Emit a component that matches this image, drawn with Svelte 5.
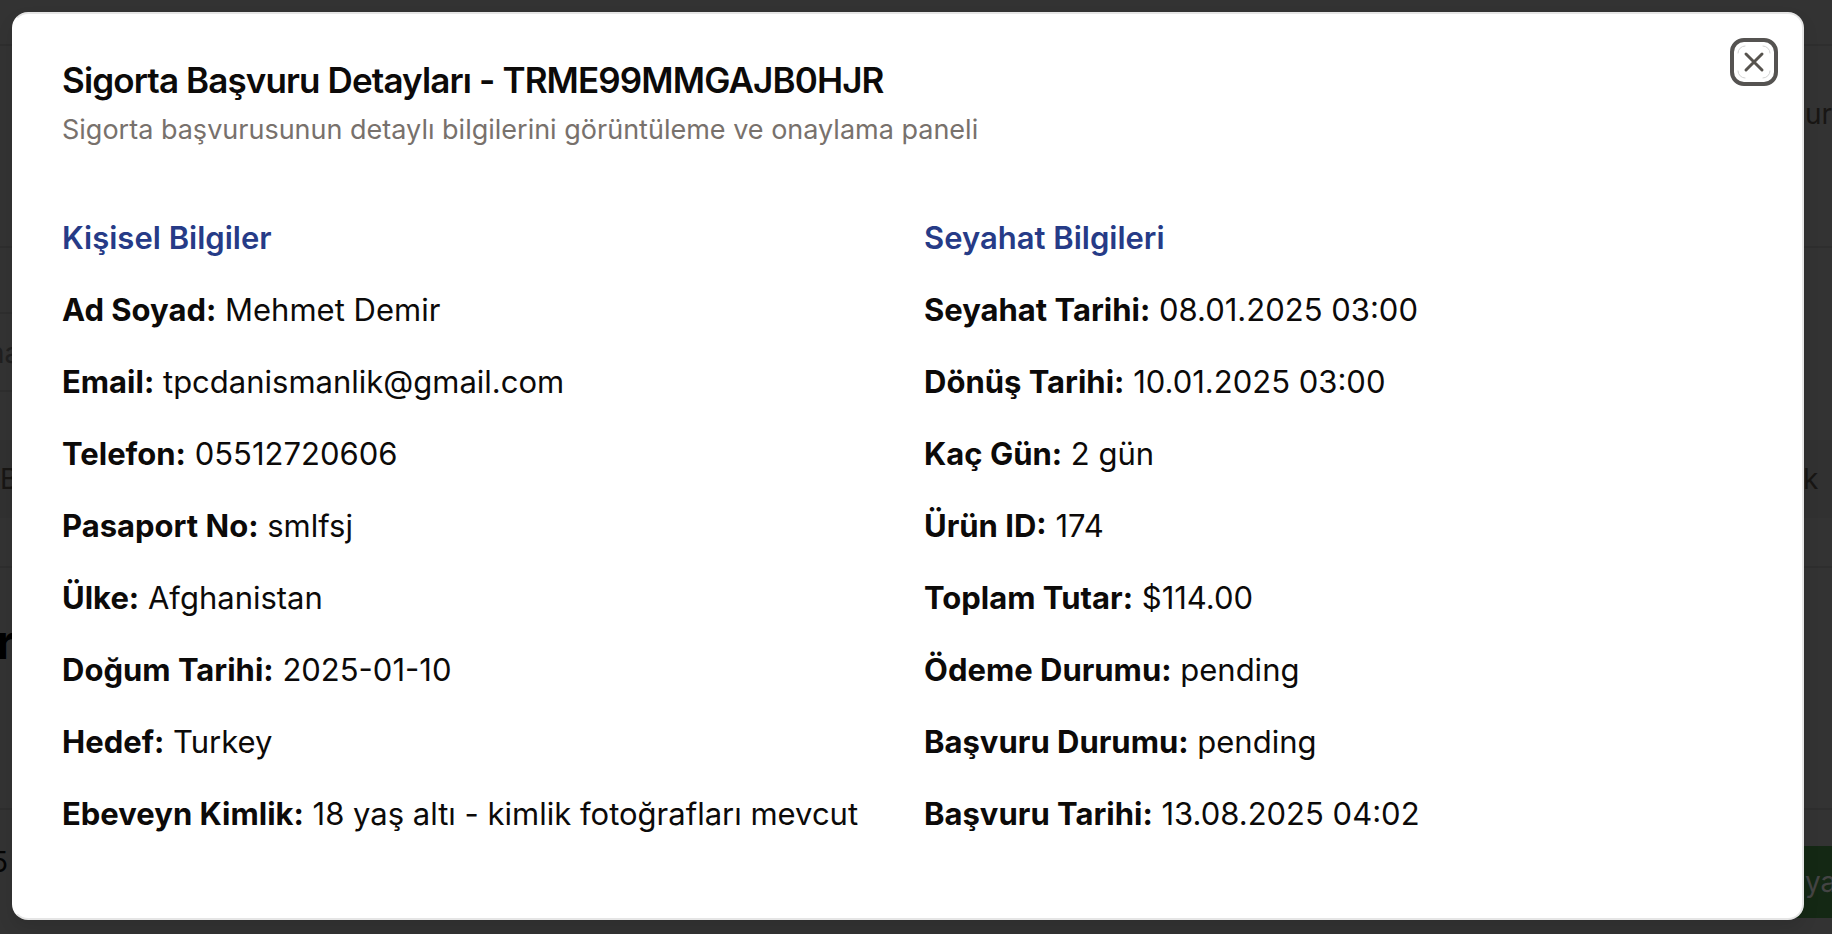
<script>
  const groups = [
    {
      heading: 'Kişisel Bilgiler',
      rows: [
        ['Ad Soyad:', 'Mehmet Demir'],
        ['Email:', 'tpcdanismanlik@gmail.com'],
        ['Telefon:', '05512720606'],
        ['Pasaport No:', 'smlfsj'],
        ['Ülke:', 'Afghanistan'],
        ['Doğum Tarihi:', '2025-01-10'],
        ['Hedef:', 'Turkey'],
        ['Ebeveyn Kimlik:', '18 yaş altı - kimlik fotoğrafları mevcut']
      ]
    },
    {
      heading: 'Seyahat Bilgileri',
      rows: [
        ['Seyahat Tarihi:', '08.01.2025 03:00'],
        ['Dönüş Tarihi:', '10.01.2025 03:00'],
        ['Kaç Gün:', '2 gün'],
        ['Ürün ID:', '174'],
        ['Toplam Tutar:', '$114.00'],
        ['Ödeme Durumu:', 'pending'],
        ['Başvuru Durumu:', 'pending'],
        ['Başvuru Tarihi:', '13.08.2025 04:02']
      ]
    }
  ];
</script>

<main>
  <!-- Dimmed page behind the dialog -->
  <div class="page" aria-hidden="true">
    <div class="bar"></div>
    <div class="bar intro"><span></span><span class="end">ur</span></div>
    <div class="bar left-only spacer"></div>
    <div class="bar left-only search"><span class="cut">na</span></div>
    <div class="bar table"><div class="band"><span>B</span><span class="end">k</span></div></div>
    <div class="bar heading"><span>r</span></div>
    <div class="bar last"><span class="five">5</span><span class="action">ya</span></div>
  </div>

  <div class="dialog" role="dialog" aria-modal="true" aria-labelledby="title" aria-describedby="summary">
    <header>
      <div class="titles">
        <h2 id="title">Sigorta Başvuru Detayları - TRME99MMGAJB0HJR</h2>
        <p id="summary">Sigorta başvurusunun detaylı bilgilerini görüntüleme ve onaylama paneli</p>
      </div>
      <button type="button" aria-label="Kapat">
        <svg viewBox="0 0 40 40" fill="none" stroke="#57534e" stroke-linecap="round">
          <path d="M4 11a7 7 0 0 1 7-7M29 4a7 7 0 0 1 7 7M36 29a7 7 0 0 1-7 7M11 36a7 7 0 0 1-7-7" stroke="#d4d4d4" stroke-width="1" />
          <path d="M12 12l16 16M28 12L12 28" stroke-width="3" />
        </svg>
      </button>
    </header>
    <div class="columns">
      {#each groups as group}
        <section>
          <h3>{group.heading}</h3>
          {#each group.rows as [label, value]}
            <p><strong>{label}</strong> {value}</p>
          {/each}
        </section>
      {/each}
    </div>
  </div>
</main>

<style>
  :global(body) { margin: 0; background: #333; }
  main {
    display: grid;
    grid-template-columns: minmax(0, 1fr);
    min-height: 100vh;
    font-family: Inter, sans-serif;
    color: #0c0a09;
  }
  .page, .dialog { grid-area: 1 / 1; }

  .page {
    overflow: hidden;
    background: #333;
    color: #181614;
    font-size: 28px;
    line-height: 40px;
  }
  .bar {
    box-sizing: border-box;
    display: flex;
    justify-content: space-between;
    height: 46px;
    border-bottom: 2px solid #2e2e2e;
  }
  .end { width: 27px; }
  .intro { height: 202px; padding-top: 48px; }
  .left-only { width: 50%; }
  .spacer { height: 66px; }
  .search { height: 78px; padding-top: 19px; color: #202020; }
  .cut { margin-left: -12px; }
  .table { height: 176px; padding: 48px 0; }
  .band {
    display: flex;
    flex: 1;
    justify-content: space-between;
    align-items: center;
    background: #313131;
  }
  .table .end { width: 29px; }
  .heading { height: 242px; padding-top: 54px; font-size: 48px; font-weight: 700; color: #000; }
  .heading span { margin-left: -4px; }
  .last { height: 124px; padding-top: 36px; border: 0; color: #050505; }
  .five { margin: -4px 0 0 -9px; }
  .action {
    box-sizing: border-box;
    width: 60px;
    height: 72px;
    padding: 16px 0 16px 33px;
    background: #142814;
    color: #444;
  }

  .dialog {
    align-self: start;
    margin: 12px 28px 14px 12px;
    background: #fff;
    border: 2px solid #e5e5e5;
    border-left-color: #fff;
    border-radius: 16px;
    box-shadow: 0 8px 16px rgba(0, 0, 0, 0.1);
  }
  header {
    display: flex;
    justify-content: space-between;
    align-items: flex-start;
    padding: 24px 24px 0 48px;
  }
  .titles { padding-top: 24px; }
  h2 { margin: 0; font-size: 35px; line-height: 36px; font-weight: 600; letter-spacing: -0.025em; }
  header p { margin: 12px 0 0; font-size: 27px; line-height: 40px; color: #78716c; }
  button {
    flex: none;
    width: 48px;
    height: 48px;
    padding: 0;
    border: 4px solid #555351;
    border-radius: 14px;
    background: #fff;
  }
  svg { display: block; width: 40px; height: 40px; }

  .columns {
    display: grid;
    grid-template-columns: 1fr 1fr;
    gap: 32px;
    padding: 64px 48px 80px;
  }
  section { display: flex; flex-direction: column; gap: 24px; }
  h3 { margin: 0; font-size: 31px; line-height: 48px; font-weight: 600; color: #263b87; }
  section p { margin: 0; font-size: 31px; line-height: 48px; }
</style>
